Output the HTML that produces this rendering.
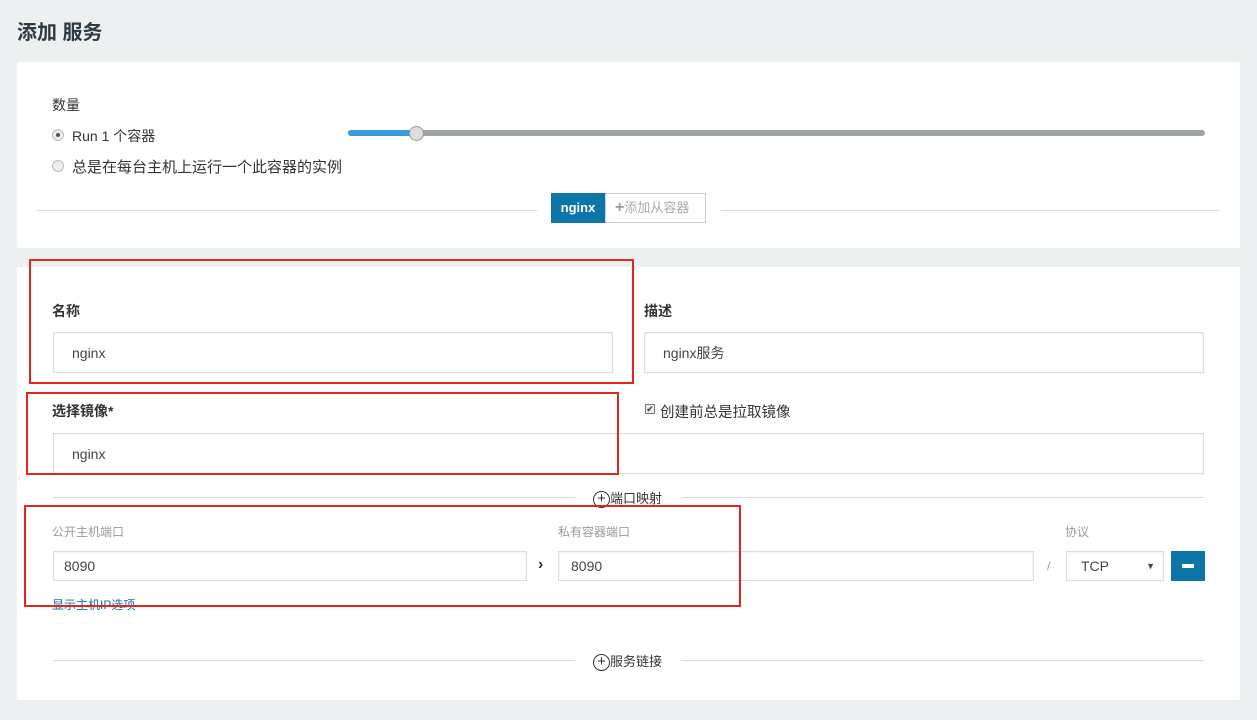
<!DOCTYPE html>
<html><head><meta charset="utf-8"><style>
*{margin:0;padding:0;box-sizing:border-box}
body{width:1257px;height:720px;background:#edf0f0;font-family:"Liberation Sans","Noto Sans CJK SC",sans-serif;color:#333;position:relative;overflow:hidden;font-size:14px}
.a{position:absolute}
.panel{position:absolute;left:17px;width:1223px;background:#fff}
.inp{position:absolute;border:1px solid #dcdcdc;background:#fff;font-size:14px;color:#444;padding-left:18px;display:flex;align-items:center;box-shadow:inset 0 1px 2px rgba(0,0,0,.05)}
.lbl{position:absolute;font-size:14px;font-weight:bold;color:#333}
.line{position:absolute;height:1px;background:#d8d8d8}
.red{position:absolute;border:2px solid #e3261c}
.sm{position:absolute;font-size:12px;color:#999}
.plus{display:inline-block;width:17px;height:17px;border:1.5px solid #333;border-radius:50%;text-align:center;line-height:13px;font-size:15px;vertical-align:middle}
</style></head><body>
<div class="a" style="left:17px;top:16px;font-size:20px;font-weight:bold;color:#2d3a44">添加 服务</div>
<div class="panel" style="top:62px;height:186px"></div>
<div class="a" style="left:52px;top:95px;font-size:14px">数量</div>
<div class="a" style="left:52px;top:129px;width:12px;height:12px;border-radius:50%;border:1px solid #bbb;background:#eee"><div style="width:4px;height:4px;border-radius:50%;background:#555;margin:3px"></div></div>
<div class="a" style="left:72px;top:126px">Run 1 个容器</div>
<div class="a" style="left:52px;top:160px;width:12px;height:12px;border-radius:50%;border:1px solid #bbb;background:#eee"></div>
<div class="a" style="left:72px;top:156px;font-size:15px">总是在每台主机上运行一个此容器的实例</div>
<div class="a" style="left:348px;top:130px;width:857px;height:6px;border-radius:3px;background:#9ea3a6"></div>
<div class="a" style="left:348px;top:130px;width:70px;height:6px;border-radius:3px;background:#3d97db"></div>
<div class="a" style="left:409px;top:126px;width:15px;height:15px;border-radius:50%;background:#ddd;border:1px solid #999"></div>
<div class="line" style="left:37px;top:210px;width:500px"></div>
<div class="line" style="left:721px;top:210px;width:498px"></div>
<div class="a" style="left:551px;top:193px;width:54px;height:30px;background:#0d76a8;color:#fff;font-size:13px;font-weight:bold;text-align:center;line-height:30px">nginx</div>
<div class="a" style="left:605px;top:193px;width:101px;height:30px;border:1px solid #ccc;color:#aaa;font-size:13px;line-height:28px;padding-left:9px"><b style="color:#999;font-size:16px">+</b>添加从容器</div>

<div class="panel" style="top:267px;height:433px"></div>
<div class="lbl" style="left:52px;top:301px">名称</div>
<div class="inp" style="left:53px;top:332px;width:560px;height:41px">nginx</div>
<div class="lbl" style="left:644px;top:301px">描述</div>
<div class="inp" style="left:644px;top:332px;width:560px;height:41px">nginx服务</div>
<div class="lbl" style="left:52px;top:401px">选择镜像*</div>
<div class="a" style="left:645px;top:404px;width:10px;height:10px;border:1px solid #777;background:#eee;font-size:9px;line-height:8px;text-align:center">✔</div>
<div class="a" style="left:660px;top:401px;font-size:14.5px">创建前总是拉取镜像</div>
<div class="inp" style="left:53px;top:433px;width:1151px;height:41px">nginx</div>
<div class="line" style="left:53px;top:497px;width:522px"></div>
<div class="line" style="left:682px;top:497px;width:522px"></div>
<div class="a" style="left:593px;top:488px;font-size:13px"><span class="plus">+</span>端口映射</div>
<div class="sm" style="left:52px;top:523px">公开主机端口</div>
<div class="sm" style="left:558px;top:523px">私有容器端口</div>
<div class="sm" style="left:1065px;top:523px">协议</div>
<div class="inp" style="left:53px;top:551px;width:474px;height:30px;padding-left:10px">8090</div>
<div class="a" style="left:538px;top:556px;font-size:16px;font-weight:bold">›</div>
<div class="inp" style="left:558px;top:551px;width:476px;height:30px;padding-left:12px">8090</div>
<div class="a" style="left:1047px;top:559px;color:#999;font-size:12px">/</div>
<div class="inp" style="left:1066px;top:551px;width:98px;height:30px;padding-left:14px">TCP<span style="position:absolute;right:8px;font-size:9px">▼</span></div>
<div class="a" style="left:1171px;top:551px;width:34px;height:30px;background:#0d76a8"><div style="width:12px;height:4px;background:#fff;margin:13px auto"></div></div>
<div class="a" style="left:52px;top:596px;font-size:12px;color:#0d76a8">显示主机IP选项</div>
<div class="line" style="left:53px;top:660px;width:522px"></div>
<div class="line" style="left:682px;top:660px;width:522px"></div>
<div class="a" style="left:593px;top:651px;font-size:13px"><span class="plus">+</span>服务链接</div>

<div class="red" style="left:29px;top:259px;width:605px;height:125px"></div>
<div class="red" style="left:26px;top:392px;width:593px;height:83px"></div>
<div class="red" style="left:24px;top:505px;width:717px;height:102px"></div>
</body></html>
